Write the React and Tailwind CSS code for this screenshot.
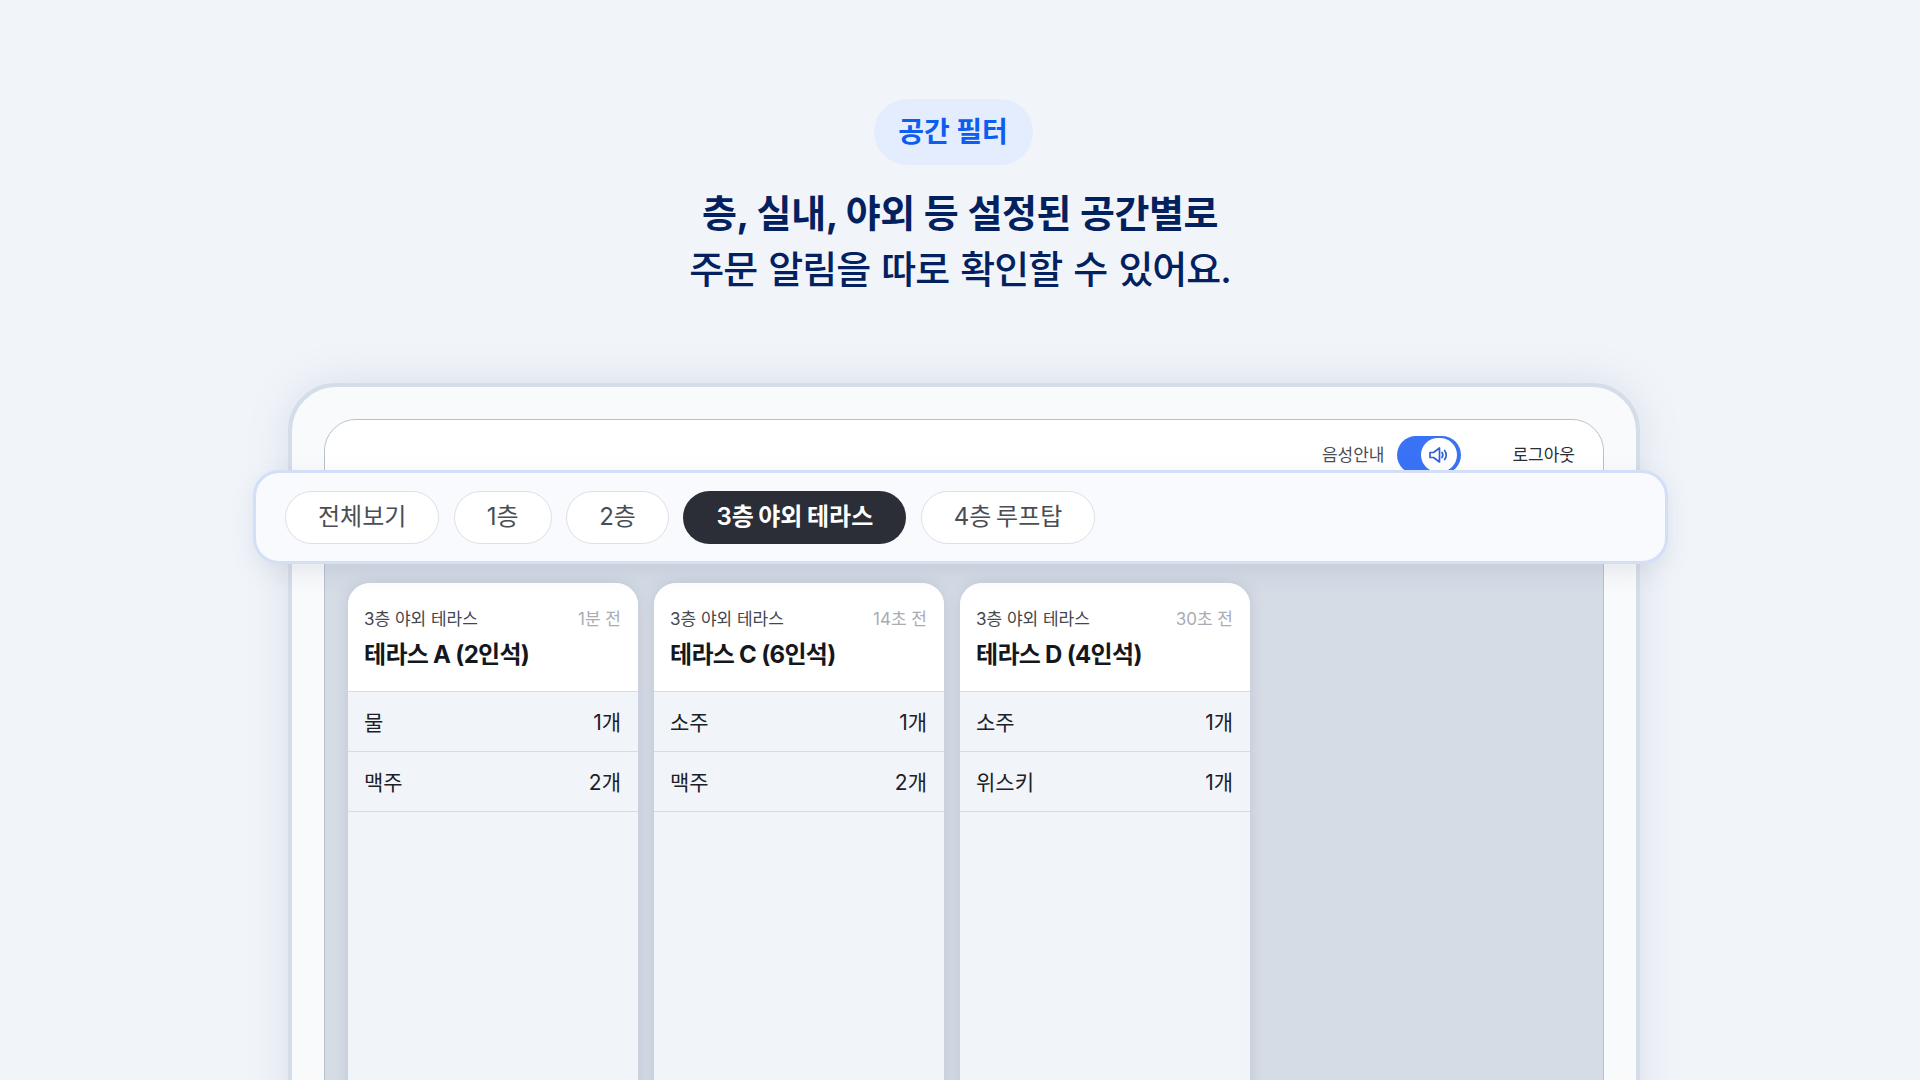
import React from 'react';

const TABS = ['전체보기', '1층', '2층', '3층 야외 테라스', '4층 루프탑'];

const CARDS = [
  { time: '1분 전', title: '테라스 A (2인석)', items: [['물', '1개'], ['맥주', '2개']] },
  { time: '14초 전', title: '테라스 C (6인석)', items: [['소주', '1개'], ['맥주', '2개']] },
  { time: '30초 전', title: '테라스 D (4인석)', items: [['소주', '1개'], ['위스키', '1개']] },
];

function SpeakerIcon() {
  return (
    <svg width="20" height="16" viewBox="0 0 20 16" fill="none" stroke="#2f62d9" strokeWidth="1.7" strokeLinejoin="round" strokeLinecap="round">
      <path d="M1 5.5h3.5L10.5 1v14L4.5 10.5H1z" />
      <path d="M13 5.5c1 1.5 1 3.5 0 5" />
      <path d="M15.6 3.5c1.9 2.6 1.9 6.4 0 9" />
    </svg>
  );
}

function OrderCard({ card }) {
  return (
    <div className="w-[290px] h-[600px] shrink-0 rounded-t-[22px] bg-[#f1f5f9] overflow-hidden shadow-[0_0_14px_rgba(110,125,150,0.22)]">
      <div className="h-[109px] bg-white pl-4 pr-[17px] pt-[24px] border-b border-[#d5dce6]">
        <div className="flex justify-between items-center h-[24px] text-[17px] leading-[24px]">
          <span className="text-[#43474e]">3층 야외 테라스</span>
          <span className="text-[#a8acb3]">{card.time}</span>
        </div>
        <div className="mt-[7px] text-[24px] leading-[34px] font-bold tracking-[-0.7px] text-[#14171c]">{card.title}</div>
      </div>
      {card.items.map(([name, qty]) => (
        <div key={name} className="h-[60px] pt-[2px] pl-4 pr-[17px] flex items-center justify-between border-b border-[#d5dce6] text-[21px] text-[#1d2026]">
          <span>{name}</span>
          <span>{qty}</span>
        </div>
      ))}
    </div>
  );
}

export default function App() {
  return (
    <div className="h-screen overflow-hidden bg-[#f1f5fa] font-['Inter','Noto_Sans_CJK_KR',sans-serif]">
      <div className="pt-[99px] flex flex-col items-center">
        <div className="mr-[14px] h-[66px] w-[159px] flex items-center justify-center rounded-full bg-[#e3edfe] text-[28px] font-bold text-[#0e5cf0]">
          공간 필터
        </div>
        <h1 className="mt-[20px] text-[38px] leading-[56px] font-bold text-[#04215f] text-center tracking-[-0.45px] [word-spacing:0.5px]">
          층, 실내, 야외 등 설정된 공간별로
        </h1>
        <p className="text-[38px] leading-[56px] font-medium text-[#04215f] text-center tracking-[-1px] [word-spacing:2px]">
          주문 알림을 따로 확인할 수 있어요.
        </p>
      </div>

      <div className="relative mt-[86px] ml-[288px] w-[1352px] h-[800px] rounded-t-[48px] border-[4px] border-[#d5dde8] bg-[#f9fafc] px-[32px] pt-[32px] shadow-[0_0_40px_rgba(120,135,165,0.2)]">
        <div className="h-[800px] rounded-t-[32px] border border-[#b7c0cc] bg-[#d5dce6] overflow-hidden">
          <div className="h-[91px] bg-white flex justify-end items-start pt-[16px] pr-[28px]">
            <span className="h-[38px] pt-[2px] flex items-center text-[17px] text-[#4a4e55]">음성안내</span>
            <div className="ml-[13px] w-[64px] h-[38px] rounded-full bg-[#3a72f6] flex items-center justify-end pr-[4px]">
              <div className="w-[36px] h-[34px] rounded-full bg-white flex items-center justify-center">
                <SpeakerIcon />
              </div>
            </div>
            <span className="ml-[51px] h-[38px] pt-[2px] flex items-center text-[17px] text-[#2b2e34]">로그아웃</span>
          </div>
          <div className="flex gap-4 pl-[23px] pt-[72px]">
            {CARDS.map(card => <OrderCard key={card.title} card={card} />)}
          </div>
        </div>

        <div className="absolute left-[-39px] top-[83px] w-[1415px] h-[94px] rounded-[26px] border-[3px] border-[#d3dff7] bg-[#f9fafd] flex items-center gap-[14.5px] pl-[29px] shadow-[0_8px_24px_rgba(90,105,130,0.13)]">
          {TABS.map((tab, i) => (
            <div
              key={tab}
              className={i === 3
                ? 'h-[53px] px-[33px] flex items-center rounded-full bg-[#2b2e36] text-[24px] font-semibold text-white [word-spacing:-1.5px]'
                : 'h-[53px] px-[32px] flex items-center rounded-full border border-[#dcdfe4] bg-white text-[24px] text-[#4a4d54] [word-spacing:-2px]'}
            >
              {tab}
            </div>
          ))}
        </div>
      </div>
    </div>
  );
}
